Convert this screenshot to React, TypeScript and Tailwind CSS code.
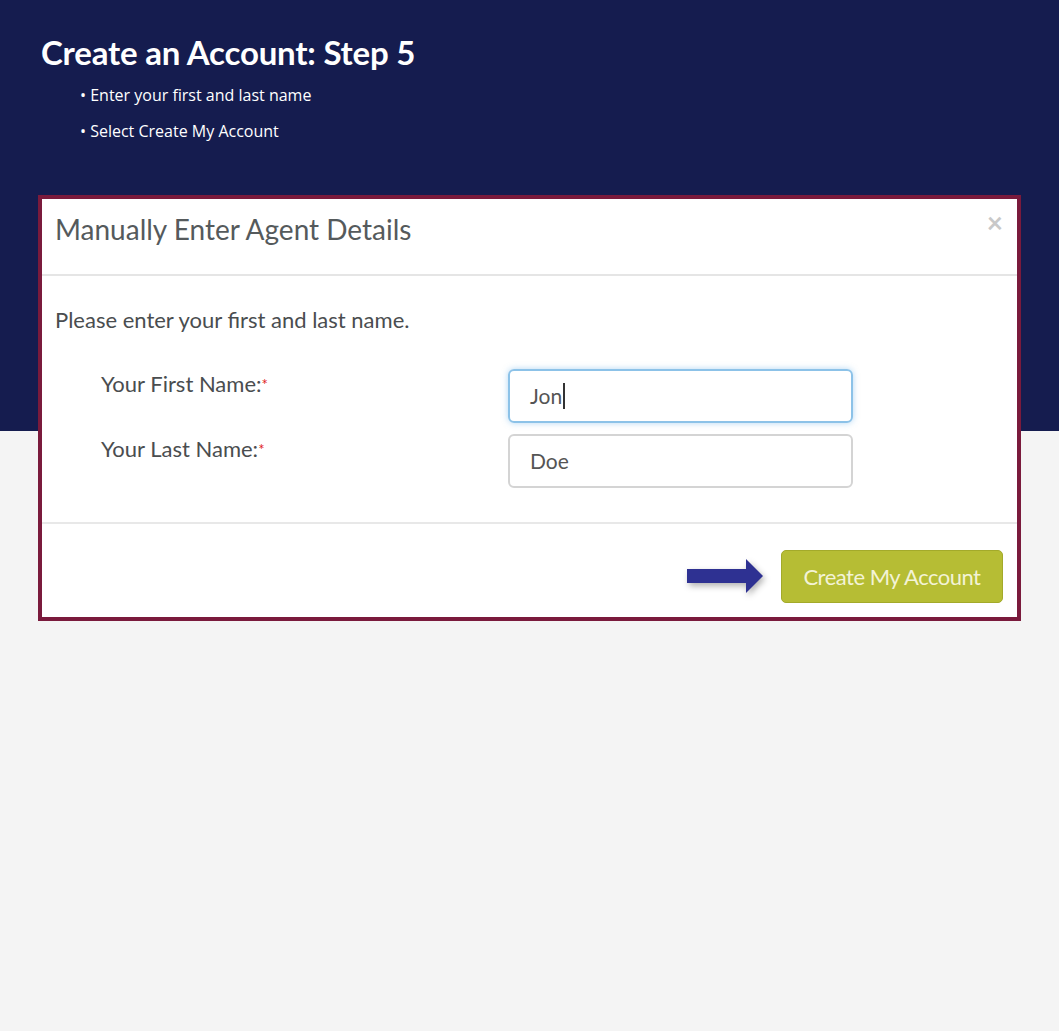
import React from "react";

export default function App() {
  return (
    <div className="min-h-[1031px] w-full bg-[#f4f4f4] relative" style={{ fontFamily: "'Open Sans', sans-serif" }}>
      <div className="bg-[#151c4f] h-[431px] w-full pt-[30px] pl-[41px]">
        <h1 className="text-white font-bold text-[33px] leading-[44px] tracking-[-0.2px] font-['Lato',sans-serif]">
          Create an Account: Step 5
        </h1>
        <ul className="mt-[10px] pl-[39px] text-white text-[16px] font-['Open_Sans',sans-serif]">
          <li className="leading-[22px]">• Enter your first and last name</li>
          <li className="leading-[22px] mt-[14px]">• Select Create My Account</li>
        </ul>
      </div>
      <div className="absolute left-[38px] top-[195px] w-[983px] h-[426px] border-[4px] border-[#7a1a3c] bg-white font-['Lato',sans-serif]">
        <div className="h-[77px] border-b-2 border-[#e5e5e5] flex items-start justify-between pl-[13px] pr-[14px]">
          <div className="text-[28px] text-[#555a5c] mt-[11px] leading-[38px]">Manually Enter Agent Details</div>
          <div className="text-[28px] text-[#c8c8c8] mt-[5px] leading-[36px] font-bold">×</div>
        </div>
        <div className="pl-[13px] pt-[30px] h-[248px] border-b-2 border-[#e8e8e8]">
          <div className="text-[22px] text-[#4a4d4f] leading-[28px]">Please enter your first and last name.</div>
          <div className="flex mt-[35px]">
            <div className="w-[453px] pl-[46px] pt-[1px] text-[22px] text-[#4a4d4f]">
              <div className="leading-[28px]">Your First Name:<span className="text-[#e02020] text-[15px] align-top">*</span></div>
              <div className="leading-[28px] mt-[37px]">Your Last Name:<span className="text-[#e02020] text-[15px] align-top">*</span></div>
            </div>
            <div className="flex flex-col gap-[11px]">
              <div className="w-[345px] h-[54px] rounded-[6px] border-2 border-[#8cc2e8] shadow-[0_0_6px_rgba(102,175,233,0.5)] flex items-center pl-[20px] text-[21px] text-[#555]">
                Jon<span className="inline-block w-[1.5px] h-[26px] bg-[#333] ml-[1px]"></span>
              </div>
              <div className="w-[345px] h-[54px] rounded-[6px] border-2 border-[#d4d4d4] flex items-center pl-[20px] text-[21px] text-[#555]">
                Doe
              </div>
            </div>
          </div>
        </div>
        <div className="flex items-center justify-end pr-[14px] pt-[26px]">
          <svg width="80" height="36" viewBox="0 0 80 36" className="mr-[14px] drop-shadow-[2px_3px_3px_rgba(0,0,0,0.3)]">
            <path d="M0 10 H59 V0 L76 17 L59 34 V24 H0 Z" fill="#2e3192" />
          </svg>
          <div className="w-[222px] h-[53px] rounded-[5px] bg-[#b6bd34] border border-[#a3aa2a] flex items-center justify-center text-[22px] text-[#f3f3d6] tracking-[-0.5px]">
            Create My Account
          </div>
        </div>
      </div>
    </div>
  );
}
